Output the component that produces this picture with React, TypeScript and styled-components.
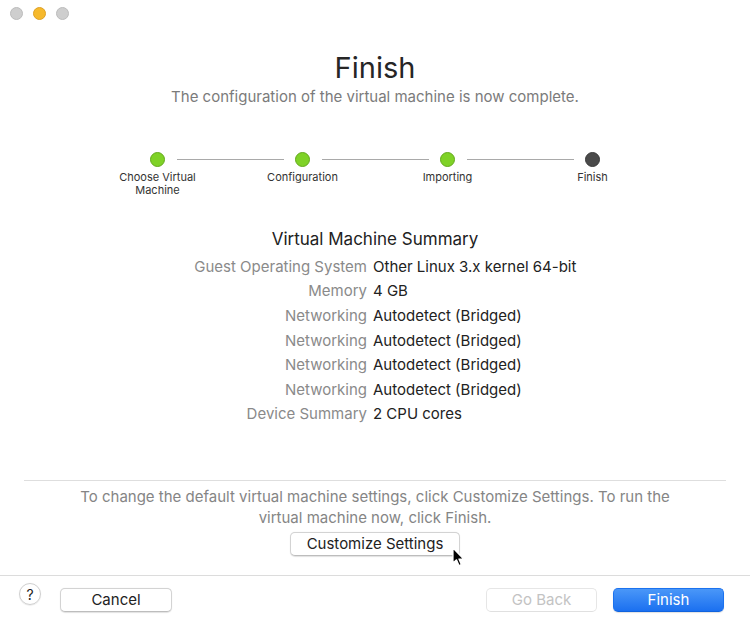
import React from "react";
import styled, { createGlobalStyle } from "styled-components";

const Global = createGlobalStyle`
  html, body { margin: 0; padding: 0; background: #ffffff; }
  body { font-family: Inter, "Noto Sans", "Liberation Sans", sans-serif; -webkit-font-smoothing: antialiased; }
  * { box-sizing: border-box; }
`;

const Window = styled.div`
  position: relative;
  width: 750px;
  height: 625px;
  background: #ffffff;
  display: flex;
  flex-direction: column;
  overflow: hidden;
`;

const TitleBar = styled.div`
  height: 26px;
  display: flex;
  align-items: center;
  gap: 10px;
  padding-left: 9.5px;
`;

const Light = styled.span<{ $color: string; $border: string }>`
  width: 13px;
  height: 13px;
  border-radius: 50%;
  background: ${(p) => p.$color};
  border: 0.5px solid ${(p) => p.$border};
`;

const Title = styled.h1`
  margin: 24px 0 0;
  font-size: 29px;
  line-height: 36px;
  font-weight: 400;
  color: #262626;
  text-align: center;
`;

const Subtitle = styled.p`
  margin: 1px 0 0;
  font-size: 15px;
  line-height: 20px;
  color: #7b7b7b;
  text-align: center;
`;

const Stepper = styled.div`
  margin: 45px auto 0;
  width: 580px;
  display: grid;
  grid-template-columns: repeat(4, 1fr);
`;

const Step = styled.div<{ $last?: boolean }>`
  position: relative;
  display: flex;
  flex-direction: column;
  align-items: center;
  &::after {
    content: "";
    display: ${(p) => (p.$last ? "none" : "block")};
    position: absolute;
    top: 7px;
    left: calc(50% + 19px);
    width: calc(100% - 38px);
    height: 1px;
    background: #a9a9a9;
  }
`;

const Dot = styled.span<{ $done: boolean }>`
  width: 15px;
  height: 15px;
  border-radius: 50%;
  background: ${(p) => (p.$done ? "#7fd227" : "#4a4a4a")};
  border: 1px solid ${(p) => (p.$done ? "#63a91c" : "#3a3a3a")};
`;

const StepLabel = styled.span`
  margin-top: 4px;
  font-size: 11px;
  line-height: 13px;
  color: #333333;
  text-align: center;
  width: 100px;
`;

const SummaryTitle = styled.h2`
  margin: 31px 0 0;
  font-size: 17px;
  line-height: 22px;
  font-weight: 400;
  color: #222222;
  text-align: center;
`;

const SummaryGrid = styled.div`
  margin-top: 4px;
  padding-right: 10px;
  display: grid;
  grid-template-columns: 1fr 1fr;
  column-gap: 6px;
  grid-auto-rows: 24.6px;
  align-items: center;
  font-size: 15px;
`;

const Key = styled.span`
  text-align: right;
  color: #8a8a8a;
  white-space: nowrap;
`;

const Value = styled.span`
  color: #222222;
  white-space: nowrap;
`;

const Lower = styled.div`
  margin-top: auto;
  display: flex;
  flex-direction: column;
  align-items: center;
`;

const Divider = styled.div`
  align-self: stretch;
  margin: 0 24px;
  height: 1px;
  background: #dedede;
`;

const Note = styled.p`
  margin: 5px 0 0;
  width: 620px;
  font-size: 15px;
  line-height: 21px;
  color: #858585;
  text-align: center;
`;

const Button = styled.button<{ $variant?: "default" | "primary" | "disabled"; $w?: number }>`
  height: 24px;
  width: ${(p) => (p.$w ? `${p.$w}px` : "auto")};
  padding: 0 10px;
  border-radius: 5px;
  font-family: inherit;
  font-size: 15px;
  line-height: 22px;
  cursor: default;
  border: 1px solid
    ${(p) => (p.$variant === "primary" ? "#1b72ef" : p.$variant === "disabled" ? "#e6e6e6" : "#d3d3d3")};
  border-bottom-color: ${(p) => (p.$variant === "primary" ? "#1163dd" : p.$variant === "disabled" ? "#e0e0e0" : "#bdbdbd")};
  color: ${(p) => (p.$variant === "primary" ? "#ffffff" : p.$variant === "disabled" ? "#c3c3c3" : "#222222")};
  background: ${(p) =>
    p.$variant === "primary" ? "linear-gradient(#4a97f8, #1b70f0)" : "#ffffff"};
  box-shadow: ${(p) => (p.$variant === "disabled" ? "none" : "0 0.5px 1px rgba(0,0,0,0.12)")};
`;

const CustomizeButton = styled(Button)`
  margin-top: 4px;
  width: 170px;
`;

const Footer = styled.div`
  margin-top: 19px;
  align-self: stretch;
  height: 50px;
  border-top: 1px solid #dcdcdc;
  display: flex;
  align-items: flex-start;
  padding: 12px 26px 0 19px;
`;

const Help = styled.span`
  width: 22px;
  height: 22px;
  margin-top: -5px;
  margin-right: 19px;
  border-radius: 50%;
  border: 1px solid #cfcfcf;
  box-shadow: 0 0.5px 1px rgba(0,0,0,0.12);
  display: flex;
  align-items: center;
  justify-content: center;
  font-size: 14px;
  color: #222;
`;

const Spacer = styled.div`
  flex: 1;
`;

const ButtonGap = styled.div`
  width: 16px;
`;

const Cursor = styled.svg`
  position: absolute;
  left: 452px;
  top: 547px;
  width: 13px;
  height: 21px;
`;

const rows: [string, string][] = [
  ["Guest Operating System", "Other Linux 3.x kernel 64-bit"],
  ["Memory", "4 GB"],
  ["Networking", "Autodetect (Bridged)"],
  ["Networking", "Autodetect (Bridged)"],
  ["Networking", "Autodetect (Bridged)"],
  ["Networking", "Autodetect (Bridged)"],
  ["Device Summary", "2 CPU cores"],
];

const steps: { label: string; done: boolean }[] = [
  { label: "Choose Virtual Machine", done: true },
  { label: "Configuration", done: true },
  { label: "Importing", done: true },
  { label: "Finish", done: false },
];

export default function App() {
  return (
    <>
      <Global />
      <Window>
        <TitleBar>
          <Light $color="#cecece" $border="#bcbcbc" />
          <Light $color="#f6b92c" $border="#dea126" />
          <Light $color="#cecece" $border="#bcbcbc" />
        </TitleBar>
        <Title>Finish</Title>
        <Subtitle>The configuration of the virtual machine is now complete.</Subtitle>
        <Stepper>
          {steps.map((s, i) => (
            <Step key={i} $last={i === steps.length - 1}>
              <Dot $done={s.done} />
              <StepLabel>{s.label}</StepLabel>
            </Step>
          ))}
        </Stepper>
        <SummaryTitle>Virtual Machine Summary</SummaryTitle>
        <SummaryGrid>
          {rows.map(([k, v], i) => (
            <React.Fragment key={i}>
              <Key>{k}</Key>
              <Value>{v}</Value>
            </React.Fragment>
          ))}
        </SummaryGrid>
        <Lower>
          <Divider />
          <Note>
            To change the default virtual machine settings, click Customize Settings. To run the
            virtual machine now, click Finish.
          </Note>
          <CustomizeButton>Customize Settings</CustomizeButton>
          <Footer>
            <Help>?</Help>
            <Button $w={112}>Cancel</Button>
            <Spacer />
            <Button $w={111} $variant="disabled">Go Back</Button>
            <ButtonGap />
            <Button $w={111} $variant="primary">Finish</Button>
          </Footer>
        </Lower>
        <Cursor viewBox="0 0 13 21">
          <path
            d="M1 1 L1 16 L4.5 12.8 L7 18.6 L9.3 17.6 L6.9 12 L11.6 12 Z"
            fill="#000"
            stroke="#fff"
            strokeWidth="1.2"
            strokeLinejoin="round"
          />
        </Cursor>
      </Window>
    </>
  );
}
